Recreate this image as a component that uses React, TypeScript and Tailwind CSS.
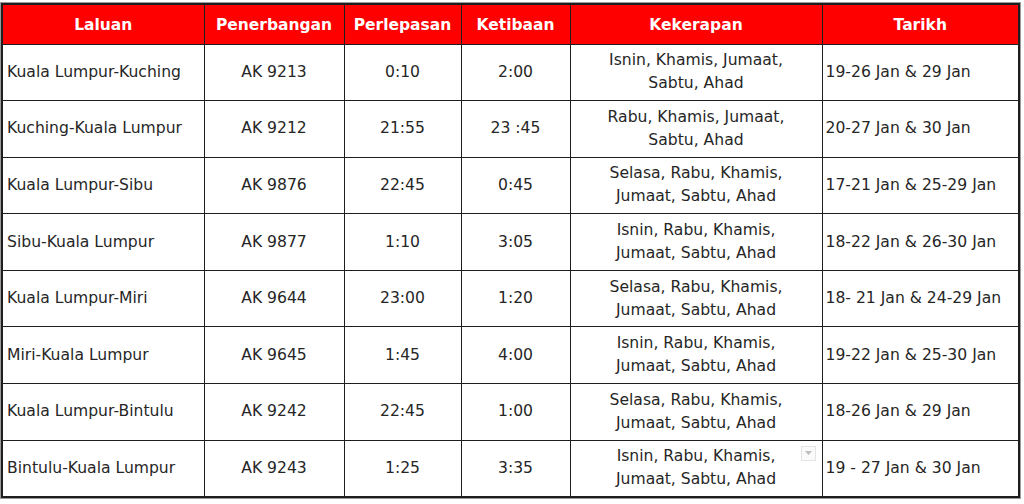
import React from 'react';

const rows = [
  ['Kuala Lumpur-Kuching', 'AK 9213', '0:10', '2:00', ['Isnin, Khamis, Jumaat,', 'Sabtu, Ahad'], '19-26 Jan & 29 Jan'],
  ['Kuching-Kuala Lumpur', 'AK 9212', '21:55', '23 :45', ['Rabu, Khamis, Jumaat,', 'Sabtu, Ahad'], '20-27 Jan & 30 Jan'],
  ['Kuala Lumpur-Sibu', 'AK 9876', '22:45', '0:45', ['Selasa, Rabu, Khamis,', 'Jumaat, Sabtu, Ahad'], '17-21 Jan & 25-29 Jan'],
  ['Sibu-Kuala Lumpur', 'AK 9877', '1:10', '3:05', ['Isnin, Rabu, Khamis,', 'Jumaat, Sabtu, Ahad'], '18-22 Jan & 26-30 Jan'],
  ['Kuala Lumpur-Miri', 'AK 9644', '23:00', '1:20', ['Selasa, Rabu, Khamis,', 'Jumaat, Sabtu, Ahad'], '18- 21 Jan & 24-29 Jan'],
  ['Miri-Kuala Lumpur', 'AK 9645', '1:45', '4:00', ['Isnin, Rabu, Khamis,', 'Jumaat, Sabtu, Ahad'], '19-22 Jan & 25-30 Jan'],
  ['Kuala Lumpur-Bintulu', 'AK 9242', '22:45', '1:00', ['Selasa, Rabu, Khamis,', 'Jumaat, Sabtu, Ahad'], '18-26 Jan & 29 Jan'],
  ['Bintulu-Kuala Lumpur', 'AK 9243', '1:25', '3:35', ['Isnin, Rabu, Khamis,', 'Jumaat, Sabtu, Ahad'], '19 - 27 Jan & 30 Jan'],
];

export default function App() {
  return (
    <div className="w-[1024px] h-[504px] bg-white pt-[3px] pl-[1px] font-['DejaVu_Sans',sans-serif]">
      <table className="border-collapse table-fixed w-[1019px] border-2 border-[#1e1e1e] shadow-[0_0_0_1px_#9a9a9a]">
        <thead>
          <tr className="h-[40px] bg-[#ff0000] text-white text-[15.5px] font-bold">
            <th className="w-[202px] border border-[#1e1e1e] pt-[3px]">Laluan</th>
            <th className="w-[140px] border border-[#1e1e1e] pt-[3px]">Penerbangan</th>
            <th className="w-[117px] border border-[#1e1e1e] pt-[3px]">Perlepasan</th>
            <th className="w-[109px] border border-[#1e1e1e] pt-[3px]">Ketibaan</th>
            <th className="w-[252px] border border-[#1e1e1e] pt-[3px]">Kekerapan</th>
            <th className="border border-[#1e1e1e] pt-[3px]">Tarikh</th>
          </tr>
        </thead>
        <tbody className="text-[15.6px] text-[#262626] leading-[23px]">
          {rows.map((r, i) => (
            <tr key={i} className="h-[56.6px]">
              <td className="border border-[#1e1e1e] pl-[4px] whitespace-nowrap">{r[0]}</td>
              <td className="border border-[#1e1e1e] text-center">{r[1]}</td>
              <td className="border border-[#1e1e1e] text-center">{r[2]}</td>
              <td className="border border-[#1e1e1e] text-center">{r[3]}</td>
              <td className="border border-[#1e1e1e] text-center relative">
                {(r[4] as string[]).map((l, j) => (
                  <div key={j}>{l}</div>
                ))}
                {i === 7 && (
                  <span className="absolute right-[6px] top-[5px] w-[15px] h-[15px] border border-[#e4e4e4] bg-[#fafafa] flex items-center justify-center">
                    <svg width="7" height="4" viewBox="0 0 7 4">
                      <path d="M0 0 L7 0 L3.5 4 Z" fill="#bdbdbd" />
                    </svg>
                  </span>
                )}
              </td>
              <td className="border border-[#1e1e1e] pl-[3px] whitespace-nowrap">{r[5]}</td>
            </tr>
          ))}
        </tbody>
      </table>
    </div>
  );
}
